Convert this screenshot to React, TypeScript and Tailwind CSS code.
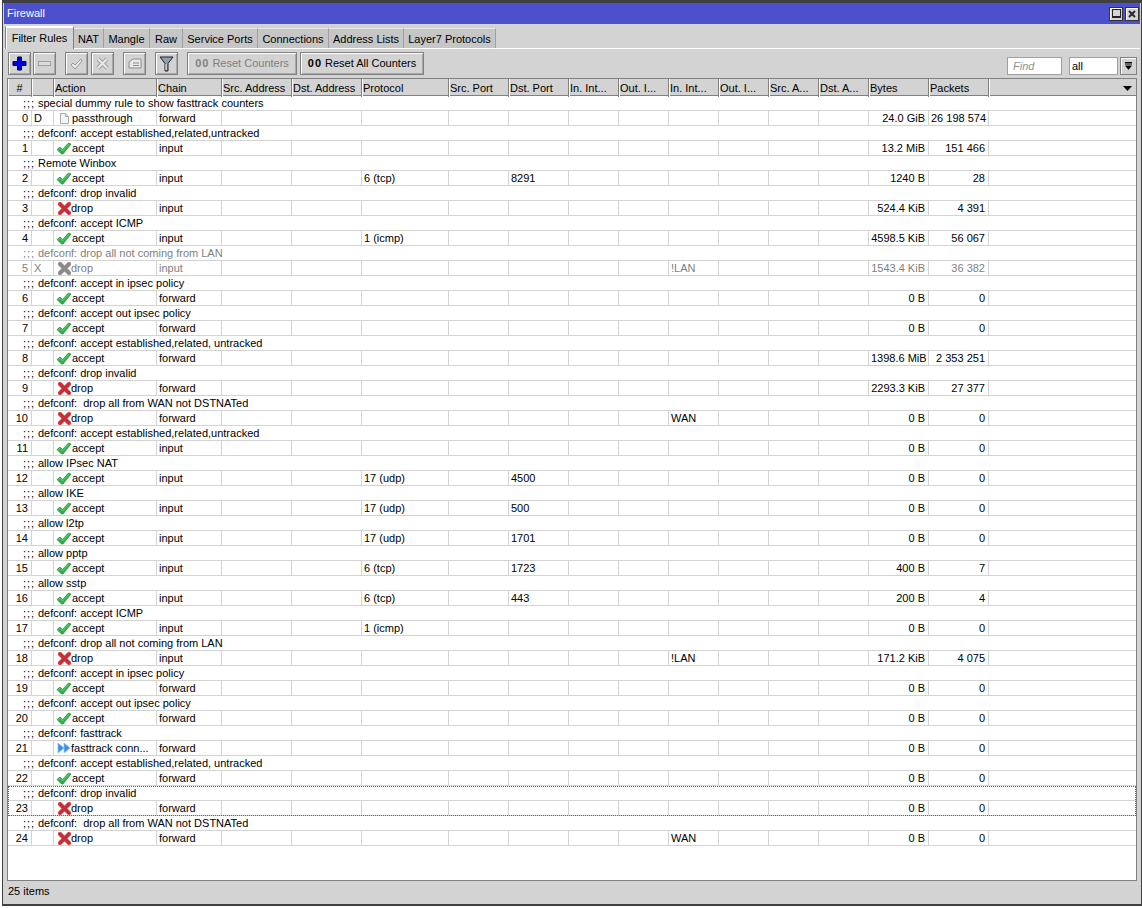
import type { ReactNode } from "react";

// largeurs de colonnes partagees par l'entete et les lignes
const COLS =
  "grid grid-cols-[24px_22px_103px_65px_70px_70px_87px_60px_60px_50px_50px_50px_50px_50px_50px_60px_60px_1fr]";

type Rule = {
  note: string;
  flag?: string;
  action: "accept" | "drop" | "passthrough" | "fasttrack";
  chain: string;
  proto?: string;
  port?: string;
  iface?: string;
  bytes: string;
  packets: string;
  off?: boolean;
  focus?: boolean;
};

const RULES: Rule[] = [
  { note: "special dummy rule to show fasttrack counters", flag: "D", action: "passthrough", chain: "forward", bytes: "24.0 GiB", packets: "26 198 574" },
  { note: "defconf: accept established,related,untracked", action: "accept", chain: "input", bytes: "13.2 MiB", packets: "151 466" },
  { note: "Remote Winbox", action: "accept", chain: "input", proto: "6 (tcp)", port: "8291", bytes: "1240 B", packets: "28" },
  { note: "defconf: drop invalid", action: "drop", chain: "input", bytes: "524.4 KiB", packets: "4 391" },
  { note: "defconf: accept ICMP", action: "accept", chain: "input", proto: "1 (icmp)", bytes: "4598.5 KiB", packets: "56 067" },
  { note: "defconf: drop all not coming from LAN", flag: "X", action: "drop", chain: "input", iface: "!LAN", bytes: "1543.4 KiB", packets: "36 382", off: true },
  { note: "defconf: accept in ipsec policy", action: "accept", chain: "forward", bytes: "0 B", packets: "0" },
  { note: "defconf: accept out ipsec policy", action: "accept", chain: "forward", bytes: "0 B", packets: "0" },
  { note: "defconf: accept established,related, untracked", action: "accept", chain: "forward", bytes: "1398.6 MiB", packets: "2 353 251" },
  { note: "defconf: drop invalid", action: "drop", chain: "forward", bytes: "2293.3 KiB", packets: "27 377" },
  { note: "defconf:  drop all from WAN not DSTNATed", action: "drop", chain: "forward", iface: "WAN", bytes: "0 B", packets: "0" },
  { note: "defconf: accept established,related,untracked", action: "accept", chain: "input", bytes: "0 B", packets: "0" },
  { note: "allow IPsec NAT", action: "accept", chain: "input", proto: "17 (udp)", port: "4500", bytes: "0 B", packets: "0" },
  { note: "allow IKE", action: "accept", chain: "input", proto: "17 (udp)", port: "500", bytes: "0 B", packets: "0" },
  { note: "allow l2tp", action: "accept", chain: "input", proto: "17 (udp)", port: "1701", bytes: "0 B", packets: "0" },
  { note: "allow pptp", action: "accept", chain: "input", proto: "6 (tcp)", port: "1723", bytes: "400 B", packets: "7" },
  { note: "allow sstp", action: "accept", chain: "input", proto: "6 (tcp)", port: "443", bytes: "200 B", packets: "4" },
  { note: "defconf: accept ICMP", action: "accept", chain: "input", proto: "1 (icmp)", bytes: "0 B", packets: "0" },
  { note: "defconf: drop all not coming from LAN", action: "drop", chain: "input", iface: "!LAN", bytes: "171.2 KiB", packets: "4 075" },
  { note: "defconf: accept in ipsec policy", action: "accept", chain: "forward", bytes: "0 B", packets: "0" },
  { note: "defconf: accept out ipsec policy", action: "accept", chain: "forward", bytes: "0 B", packets: "0" },
  { note: "defconf: fasttrack", action: "fasttrack", chain: "forward", bytes: "0 B", packets: "0" },
  { note: "defconf: accept established,related, untracked", action: "accept", chain: "forward", bytes: "0 B", packets: "0" },
  { note: "defconf: drop invalid", action: "drop", chain: "forward", bytes: "0 B", packets: "0", focus: true },
  { note: "defconf:  drop all from WAN not DSTNATed", action: "drop", chain: "forward", iface: "WAN", bytes: "0 B", packets: "0" },
];

const TABS = ["NAT", "Mangle", "Raw", "Service Ports", "Connections", "Address Lists", "Layer7 Protocols"];
const TAB_WIDTHS = ["w-[30px]", "w-[46px]", "w-[33px]", "w-[75px]", "w-[71px]", "w-[75px]", "w-[92px]"];

const HEADERS = [
  "Action", "Chain", "Src. Address", "Dst. Address", "Protocol", "Src. Port", "Dst. Port",
  "In. Int...", "Out. I...", "In. Int...", "Out. I...", "Src. A...", "Dst. A...", "Bytes", "Packets",
];

function CheckIcon({ off }: { off?: boolean }) {
  return (
    <svg width="16" height="13" viewBox="0 0 16 13" className="shrink-0">
      <path d="M1 7.5 L4 5 L6.5 7.5 L12.5 1 L15 2 L7 12 L5.5 12 Z" fill={off ? "#999" : "#2fae4a"} stroke={off ? "#888" : "#1f8f3a"} strokeWidth="0.7" />
      <path d="M2.5 7.5 L4 6.5 L6.5 9 L12.8 2.2" fill="none" stroke={off ? "#aaa" : "#5fd870"} strokeWidth="1" />
    </svg>
  );
}

function CrossIcon({ off }: { off?: boolean }) {
  const main = off ? "#8a8a8a" : "#c62f35";
  const edge = off ? "#9a9a9a" : "#e0666a";
  return (
    <svg width="13" height="13" viewBox="0 0 13 13" className="shrink-0">
      <path d="M2 2 L11 11 M11 2 L2 11" stroke={edge} strokeWidth="4.4" strokeLinecap="round" />
      <path d="M2 2 L11 11 M11 2 L2 11" stroke={main} strokeWidth="3.2" strokeLinecap="round" />
    </svg>
  );
}

function PageIcon() {
  return (
    <svg width="9" height="11" viewBox="0 0 9 11" className="shrink-0">
      <path d="M0.5 0.5 H5.5 L8.5 3.5 V10.5 H0.5 Z" fill="#f4f4f4" stroke="#a8a8a8" />
      <path d="M5.5 0.5 V3.5 H8.5" fill="#dcdcdc" stroke="#a8a8a8" />
    </svg>
  );
}

function FastIcon() {
  return (
    <svg width="14" height="12" viewBox="0 0 14 12" className="shrink-0">
      <path d="M1 1 L7 6 L1 11 Z" fill="#3f8fe0" stroke="#8cc0f0" strokeWidth="0.8" />
      <path d="M7 1 L13 6 L7 11 Z" fill="#3f8fe0" stroke="#8cc0f0" strokeWidth="0.8" />
    </svg>
  );
}

function ActionCell({ rule }: { rule: Rule }) {
  let icon: ReactNode;
  let label = rule.action as string;
  if (rule.action === "accept") icon = <CheckIcon off={rule.off} />;
  if (rule.action === "drop") icon = <CrossIcon off={rule.off} />;
  if (rule.action === "passthrough") icon = <PageIcon />;
  if (rule.action === "fasttrack") {
    icon = <FastIcon />;
    label = "fasttrack conn...";
  }
  const pad = rule.action === "passthrough" ? "pl-[6px] gap-[3px]" : rule.action === "fasttrack" ? "pl-[3px] gap-0" : rule.action === "accept" ? "pl-[2px] gap-0" : "pl-[4px] gap-0";
  return (
    <div className={`flex items-center border-r border-[#d3d3d3] ${pad}`}>
      {icon}
      <span className="whitespace-nowrap">{label}</span>
    </div>
  );
}

function Cell({ children, right }: { children?: ReactNode; right?: boolean }) {
  return (
    <div className={`overflow-hidden whitespace-nowrap border-r border-[#d3d3d3] pl-[2px] ${right ? "pr-[3px] text-right" : ""}`}>
      {children}
    </div>
  );
}

function RuleRows({ rule, index }: { rule: Rule; index: number }) {
  const tone = rule.off ? "text-[#808080]" : "text-black";
  const rows = (
    <>
      <div className={`flex h-[15px] border-b border-[#d3d3d3] pl-[15px] leading-[14px] whitespace-pre ${tone}`}>
        <span className="w-[15px] tracking-[1px]">;;;</span>
        <span>{rule.note}</span>
      </div>
      <div className={`${COLS} h-[15px] border-b border-[#d3d3d3] leading-[14px] ${tone}`}>
        <Cell right>{index}</Cell>
        <Cell>{rule.flag}</Cell>
        <ActionCell rule={rule} />
        <Cell>{rule.chain}</Cell>
        <Cell />
        <Cell />
        <Cell>{rule.proto}</Cell>
        <Cell />
        <Cell>{rule.port}</Cell>
        <Cell />
        <Cell />
        <Cell>{rule.iface}</Cell>
        <Cell />
        <Cell />
        <Cell />
        <Cell right>{rule.bytes}</Cell>
        <Cell right>{rule.packets}</Cell>
      </div>
    </>
  );
  if (rule.focus) {
    return <div className="outline-1 -outline-offset-1 outline-dotted outline-[#666]">{rows}</div>;
  }
  return rows;
}

function ToolButton({ children, className = "w-[23px]" }: { children: ReactNode; className?: string }) {
  return (
    <div className={`flex h-[23px] items-center justify-center border border-[#808080] bg-[#d3d3d3] shadow-[inset_1px_1px_0_#fff,inset_-1px_-1px_0_#a8a8a8] ${className}`}>
      {children}
    </div>
  );
}

export default function App() {
  return (
    <div className="h-[908px] w-[1142px] overflow-hidden bg-white font-['Liberation_Sans',sans-serif] text-[11px] text-black">
      <div className="ml-[2px] flex h-[906px] w-[1140px] flex-col border-x border-b-2 border-t-[3px] border-[#404040] bg-[#d3d3d3] px-[1px] pb-[3px]">
        {/* barre de titre */}
        <div className="flex h-[21px] shrink-0 items-center justify-between bg-[#4c50cc] pl-[3px] pr-[1px] text-white">
          <span>Firewall</span>
          <div className="flex gap-[2px]">
            <div className="flex h-[14px] w-[14px] items-center justify-center border border-[#333] bg-[#d3d3d3] shadow-[inset_1px_1px_0_#fff]">
              <div className="h-[9px] w-[9px] border border-b-2 border-[#222]" />
            </div>
            <div className="flex h-[14px] w-[14px] items-center justify-center border border-[#333] bg-[#d3d3d3] shadow-[inset_1px_1px_0_#fff]">
              <svg width="8" height="8" viewBox="0 0 8 8">
                <path d="M1 1 L7 7 M7 1 L1 7" stroke="#222" strokeWidth="1.8" />
              </svg>
            </div>
          </div>
        </div>

        {/* onglets */}
        <div className="flex h-[25px] shrink-0 items-end border-b border-white pl-[1px]">
          <div className="mb-[-1px] flex h-[23px] w-[69px] items-center justify-center border-x border-t border-x-[#808080] border-t-white bg-[#d3d3d3] shadow-[inset_1px_1px_0_#fff]">
            Filter Rules
          </div>
          {TABS.map((tab, i) => (
            <div
              key={tab}
              className={`flex h-[20px] items-center justify-center border-r border-t border-r-[#a0a0a0] border-t-[#e8e8e8] bg-[#c6c6c6] pt-[2px] ${TAB_WIDTHS[i]}`}
            >
              {tab}
            </div>
          ))}
        </div>

        {/* barre d'outils */}
        <div className="flex h-[29px] shrink-0 items-center pl-[4px] pr-[3px]">
          <ToolButton>
            <svg width="15" height="15" viewBox="0 0 15 15">
              <path d="M5.5 1 H9.5 V5.5 H14 V9.5 H9.5 V14 H5.5 V9.5 H1 V5.5 H5.5 Z" fill="#0000e0" stroke="#000030" />
            </svg>
          </ToolButton>
          <ToolButton className="ml-[2px] w-[23px]">
            <div className="h-[5px] w-[13px] border border-[#a0a0a0] bg-[#dcdcdc]" />
          </ToolButton>
          <ToolButton className="ml-[9px] w-[23px]">
            <svg width="13" height="12" viewBox="0 0 13 12">
              <path d="M1 7 L3 5 L5 7 L11 1 L12 3 L5 11 Z" fill="#e8e8e8" stroke="#9a9a9a" />
            </svg>
          </ToolButton>
          <ToolButton className="ml-[3px] w-[23px]">
            <svg width="13" height="13" viewBox="0 0 13 13">
              <path d="M2 2 L11 11 M11 2 L2 11" stroke="#9a9a9a" strokeWidth="4" />
              <path d="M2 2 L11 11 M11 2 L2 11" stroke="#e8e8e8" strokeWidth="2.4" />
            </svg>
          </ToolButton>
          <ToolButton className="ml-[9px] w-[23px]">
            <svg width="14" height="12" viewBox="0 0 14 12">
              <path d="M1 4 L5 1 H13 V10 H1 Z" fill="#e8e8e8" stroke="#8c8c8c" />
              <path d="M5 5 H11 M5 7.5 H11" stroke="#8c8c8c" />
            </svg>
          </ToolButton>
          <ToolButton className="ml-[9px] w-[23px]">
            <svg width="15" height="16" viewBox="0 0 15 16">
              <path d="M1 1 H14 L9 7.5 V15 H6 V7.5 Z" fill="#8aa2b4" stroke="#222" />
              <path d="M7 8 V14" stroke="#e8eef2" />
            </svg>
          </ToolButton>
          <ToolButton className="ml-[9px] w-[110px] gap-[3px] text-[#808080]">
            <span className="font-bold tracking-[1px]">00</span> Reset Counters
          </ToolButton>
          <ToolButton className="ml-[3px] w-[124px] gap-[3px]">
            <span className="font-bold tracking-[1px]">00</span> Reset All Counters
          </ToolButton>
          <div className="ml-auto flex items-center pt-[5px]">
            <div className="flex h-[18px] w-[55px] items-center border border-[#a0a0a0] bg-white pl-[5px] italic text-[#909090]">
              Find
            </div>
            <div className="ml-[7px] flex h-[18px] w-[49px] items-center border border-[#a0a0a0] bg-white pl-[2px]">all</div>
            <div className="ml-[2px] flex h-[18px] w-[17px] items-center justify-center border border-[#808080] shadow-[inset_1px_1px_0_#fff]">
              <svg width="9" height="9" viewBox="0 0 9 9">
                <path d="M1 0.5 H8 M1 2 H8" stroke="#000" />
                <path d="M1 3.5 H8 L4.5 8 Z" fill="#000" />
              </svg>
            </div>
          </div>
        </div>

        {/* tableau */}
        <div className="ml-[3px] mr-[3px] flex min-h-0 flex-1 flex-col border border-[#808080] bg-white">
          <div className={`${COLS} h-[17px] shrink-0 border-b border-[#808080] bg-[#d3d3d3] leading-[18px]`}>
            <div className="border-r border-[#808080] text-center shadow-[inset_1px_0_0_#fff]">#</div>
            <div className="border-r border-[#808080] shadow-[inset_1px_0_0_#fff]" />
            {HEADERS.map((h, i) => (
              <div key={i} className="overflow-hidden whitespace-nowrap border-r border-[#808080] pl-[1px] shadow-[inset_1px_0_0_#fff]">
                {h}
              </div>
            ))}
            <div className="flex items-center justify-end pr-[4px] shadow-[inset_1px_0_0_#fff]">
              <svg width="9" height="5" viewBox="0 0 9 5">
                <path d="M0 0 H9 L4.5 5 Z" fill="#000" />
              </svg>
            </div>
          </div>
          <div className="min-h-0 flex-1">
            {RULES.map((rule, i) => (
              <RuleRows key={i} rule={rule} index={i} />
            ))}
          </div>
        </div>

        {/* barre d'etat */}
        <div className="flex h-[20px] shrink-0 items-center pl-[4px]">25 items</div>
      </div>
    </div>
  );
}
